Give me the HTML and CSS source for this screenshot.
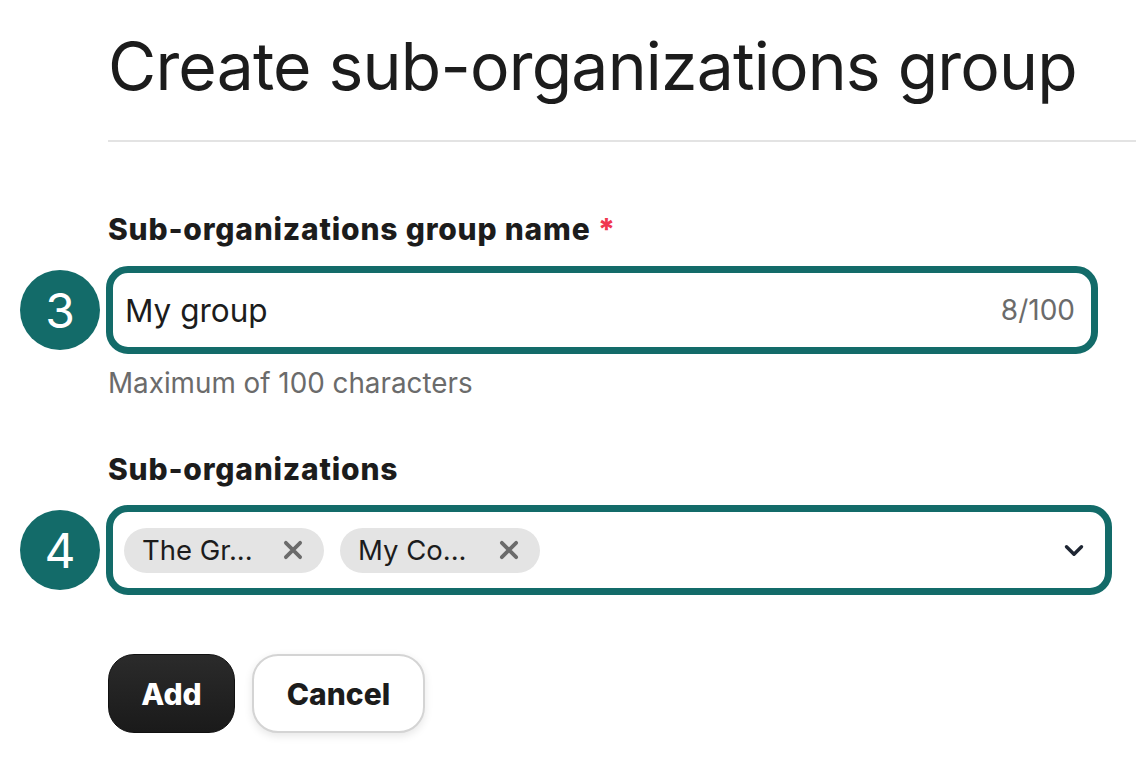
FILE: index.html
```html
<!DOCTYPE html>
<html lang="en">
<head>
<meta charset="utf-8">
<title>Create sub-organizations group</title>
<link rel="stylesheet" href="styles.css">
</head>
<body>
<main class="page">
  <h1 class="title">Create sub-organizations group</h1>
  <hr class="divider">

  <section class="field field-name">
    <label class="label" for="group-name">Sub-organizations group name <span class="req">*</span></label>
    <div class="row">
      <span class="badge">3</span>
      <div class="input input-name">
        <span class="value" id="group-name">My group</span>
        <span class="counter">8/100</span>
      </div>
    </div>
    <p class="help">Maximum of 100 characters</p>
  </section>

  <section class="field field-orgs">
    <div class="label">Sub-organizations</div>
    <div class="row">
      <span class="badge">4</span>
      <div class="input input-select">
        <div class="chips">
          <span class="chip"><span class="chip-text">The Gr...</span>
            <svg class="chip-x" viewBox="0 0 20 20" width="22" height="22"><path d="M3.5 3.5L16.5 16.5M16.5 3.5L3.5 16.5" stroke="#6b6b6b" stroke-width="3.4" stroke-linecap="round"/></svg>
          </span>
          <span class="chip"><span class="chip-text">My Co...</span>
            <svg class="chip-x" viewBox="0 0 20 20" width="22" height="22"><path d="M3.5 3.5L16.5 16.5M16.5 3.5L3.5 16.5" stroke="#6b6b6b" stroke-width="3.4" stroke-linecap="round"/></svg>
          </span>
        </div>
        <svg class="chevron" viewBox="0 0 20 14" width="22" height="15"><path d="M3 3.5L10 10.5L17 3.5" fill="none" stroke="#1f2633" stroke-width="3.2" stroke-linecap="round" stroke-linejoin="round"/></svg>
      </div>
    </div>
  </section>

  <div class="actions">
    <button class="btn btn-primary">Add</button>
    <button class="btn btn-secondary">Cancel</button>
  </div>
</main>
</body>
</html>
```

FILE: styles.css
```css
* { box-sizing: border-box; }
html, body { margin: 0; padding: 0; background: #ffffff; }
body {
  font-family: Inter, "Noto Sans", "Liberation Sans", sans-serif;
  color: #1c1c1c;
  width: 1136px;
  height: 762px;
  overflow: hidden;
}
.page {
  padding-top: 26px;
}
.title {
  margin: 0 0 0 108px;
  font-family: Inter, "Liberation Sans", sans-serif;
  font-weight: 400;
  font-size: 66px;
  line-height: 80px;
  letter-spacing: -0.8px;
  color: #1c1c1c;
  white-space: nowrap;
}
.divider {
  margin: 34px 0 0 108px;
  border: 0;
  height: 2px;
  background: #e3e3e3;
}
.field-name { margin-top: 70px; }
.label {
  display: block;
  padding-left: 108px;
  font-size: 30px;
  font-weight: 800;
  line-height: 34px;
  color: #1c1c1c;
  letter-spacing: 0.8px;
}
.req { color: #f0384f; }
.row {
  display: flex;
  align-items: center;
}
.badge {
  flex: none;
  width: 80px;
  height: 80px;
  margin: 0 6px 0 20px;
  border-radius: 50%;
  background: #136b69;
  color: #ffffff;
  font-size: 48px;
  font-weight: 400;
  display: flex;
  align-items: center;
  justify-content: center;
}
.input {
  flex: none;
  border: 7px solid #136b69;
  border-radius: 22px;
  display: flex;
  align-items: center;
  background: #fff;
}
.field-name .row { margin-top: 20px; }
.input-name {
  width: 992px;
  height: 88px;
  padding: 0 16px 0 12px;
  justify-content: space-between;
}
.value {
  font-size: 31.5px;
  color: #1c1c1c;
}
.counter {
  font-size: 28px;
  color: #6b6b6b;
}
.help {
  margin: 13px 0 0 108px;
  font-size: 27.8px;
  line-height: 32px;
  color: #6b6b6b;
}
.field-orgs { margin-top: 53px; }
.field-orgs .row { margin-top: 19px; }
.input-select {
  width: 1006px;
  height: 90px;
  padding: 0 20px 0 11px;
  justify-content: space-between;
}
.chips {
  display: flex;
  gap: 16px;
}
.chip {
  display: flex;
  align-items: center;
  height: 45px;
  width: 200px;
  padding: 0 20px 0 18px;
  border-radius: 23px;
  background: #e4e4e4;
  justify-content: space-between;
}
.chip-text {
  font-size: 27.5px;
  color: #1c1c1c;
}
.chip-x { flex: none; }
.actions {
  display: flex;
  gap: 17px;
  margin: 59px 0 0 108px;
}
.btn {
  height: 79px;
  border-radius: 26px;
  font-family: Inter, "Liberation Sans", sans-serif;
  font-size: 30px;
  font-weight: 800;
  cursor: pointer;
}
.btn-primary {
  width: 127px;
  background: linear-gradient(#2b2b2b, #1a1a1a);
  border: 1px solid #111;
  color: #ffffff;
}
.btn-secondary {
  width: 173px;
  background: #ffffff;
  border: 2px solid #d4d4d4;
  color: #1c1c1c;
  box-shadow: 0 3px 8px rgba(0,0,0,0.10);
}
```
